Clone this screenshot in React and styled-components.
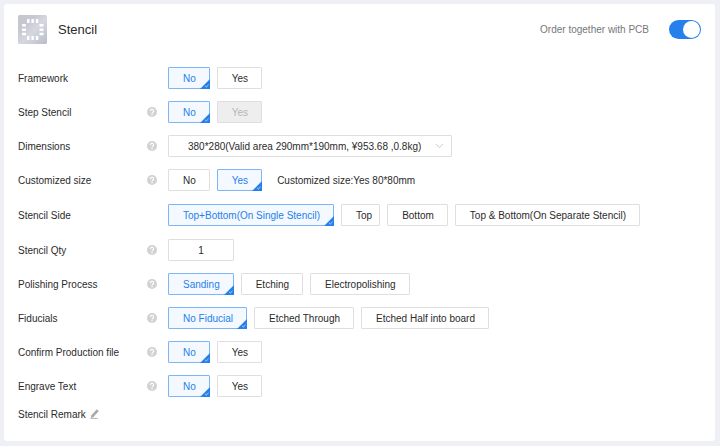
import React, { useState } from 'react';
import styled, { createGlobalStyle, css } from 'styled-components';

const GlobalStyle = createGlobalStyle`
  *, *::before, *::after {
    box-sizing: border-box;
  }

  body {
    margin: 0;
    background-color: #eff0f5;
    color: #2b2b2b;
    font-family: 'Liberation Sans', Arial, sans-serif;
    font-size: 10px;
  }

  button, input, select {
    font: inherit;
    color: inherit;
    margin: 0;
  }
`;

const Page = styled.main`
  padding: 4px 5px 4px 4px;
`;

const Card = styled.section`
  background-color: #fff;
  border-radius: 3px;
  padding: 11px 14px 21px;
`;

const Header = styled.header`
  display: flex;
  align-items: center;
  height: 29px;
  margin-bottom: 23px;
`;

const Title = styled.h1`
  flex: 1;
  margin: 0 0 0 11px;
  font-size: 13px;
  font-weight: 400;
`;

const SwitchLabel = styled.label`
  display: flex;
  align-items: center;
  gap: 20px;
  color: #777;
  cursor: pointer;
`;

const Switch = styled.input`
  appearance: none;
  display: flex;
  align-items: center;
  width: 32px;
  height: 19px;
  padding: 0 1px;
  border-radius: 10px;
  background-color: #ccc;
  cursor: pointer;

  &::before {
    content: '';
    width: 17px;
    height: 17px;
    border-radius: 50%;
    background-color: #fff;
  }

  &:checked {
    justify-content: flex-end;
    background-color: #2680eb;
  }
`;

const Form = styled.div`
  display: flex;
  flex-direction: column;
  gap: 12px;
`;

const Row = styled.div`
  display: flex;
  align-items: center;
  min-height: 22px;
  padding: ${({ $roomy }) => ($roomy ? '1px 0' : '0')};
`;

const LabelCell = styled.div`
  display: flex;
  align-items: center;
  justify-content: space-between;
  flex: none;
  width: 139px;
  margin-right: 11px;
`;

const Controls = styled.div`
  display: flex;
  flex-wrap: wrap;
  align-items: center;
  gap: 7px;
`;

const selected = css`
  border-color: #7db5f8;
  background-color: #f4f9ff;
  color: #2680eb;
`;

const disabled = css`
  background-color: #eee;
  color: #b5b5b5;
`;

const OptionButton = styled.button`
  position: relative;
  height: 22px;
  padding: ${({ $lead }) => ($lead ? '0 7px 0 14px' : '0 13px 0 14px')};
  border: 1px solid #dfdfdf;
  border-radius: 1px;
  background-color: #fff;
  white-space: nowrap;
  cursor: pointer;

  ${({ $selected }) => $selected && selected}

  &:disabled {
    ${disabled}
    cursor: not-allowed;
  }
`;

const Corner = styled.svg`
  position: absolute;
  right: -1px;
  bottom: -1px;
  width: 10px;
  height: 10px;
`;

const SelectBox = styled.div`
  display: grid;
  align-items: center;
  width: 284px;

  > * {
    grid-area: 1 / 1;
  }

  > svg {
    justify-self: end;
    margin-right: 8px;
    pointer-events: none;
  }
`;

const Select = styled.select`
  appearance: none;
  width: 100%;
  height: 22px;
  padding: 0 24px 0 19px;
  border: 1px solid #dfdfdf;
  border-radius: 1px;
  background-color: #fff;
`;

const QtyInput = styled.input`
  width: 66px;
  height: 22px;
  padding: 0;
  border: 1px solid #dfdfdf;
  border-radius: 1px;
  text-align: center;
`;

const Note = styled.span`
  margin-left: 8px;
`;

const Remark = styled.div`
  display: flex;
  align-items: center;
  gap: 4px;
  height: 12px;
  margin-top: -1px;
`;

const IconButton = styled.button`
  display: flex;
  padding: 0;
  border: 0;
  background: none;
  cursor: pointer;
`;

const StencilLogo = () => (
  <svg width="29" height="29" viewBox="0 0 29 29" aria-hidden="true">
    <defs>
      <linearGradient id="steel" x1="0" y1="0" x2="1" y2="1">
        <stop offset="0" stopColor="#c3c5cf" />
        <stop offset="0.3" stopColor="#c6c9d2" />
        <stop offset="0.55" stopColor="#d6d8e0" />
        <stop offset="1" stopColor="#b9bbcb" />
      </linearGradient>
    </defs>
    <rect width="29" height="29" rx="1.5" fill="url(#steel)" />
    <g fill="#fff">
      {[9, 13.4, 17.8].map((p) => (
        <React.Fragment key={p}>
          <rect x={p} y="4" width="2.5" height="4" rx="0.4" />
          <rect x={p} y="21" width="2.5" height="4" rx="0.4" />
          <rect x="4" y={p} width="4" height="2.5" rx="0.4" />
          <rect x="21.5" y={p} width="4" height="2.5" rx="0.4" />
        </React.Fragment>
      ))}
    </g>
  </svg>
);

const HelpIcon = () => (
  <svg width="10" height="10" viewBox="0 0 10 10" role="img" aria-label="Help">
    <circle cx="5" cy="5" r="5" fill="#d2d2d2" />
    <path d="M3.4 4a1.6 1.6 0 1 1 2.4 1.3C5.2 5.7 5 5.9 5 6.5" fill="none" stroke="#fff" strokeWidth="1.1" />
    <circle cx="5" cy="7.8" r="0.7" fill="#fff" />
  </svg>
);

const ChevronIcon = () => (
  <svg width="9" height="6" viewBox="0 0 9 6" aria-hidden="true">
    <path d="M0.8 0.8L4.5 4.7L8.2 0.8" fill="none" stroke="#c4c7ce" strokeWidth="0.9" />
  </svg>
);

const PencilIcon = () => (
  <svg width="10" height="10" viewBox="0 0 10 10" aria-hidden="true">
    <path d="M1.2 6.4L6.8 0.3L8.8 2.1L3.3 8.2L0.7 8.8Z" fill="#aaa" />
    <path d="M0.5 9.4H7.6" stroke="#aaa" strokeWidth="0.9" />
  </svg>
);

const Options = ({ label, items, value, onChange }) => (
  <Controls role="group" aria-label={label}>
    {items.map((item) => (
      <OptionButton
        key={item.text}
        type="button"
        disabled={item.disabled}
        aria-pressed={item.text === value}
        $selected={item.text === value}
        $lead={item.lead}
        onClick={() => onChange(item.text)}
      >
        {item.text}
        {item.text === value && (
          <Corner viewBox="0 0 10 10" aria-hidden="true">
            <path d="M10 0V10H0Z" fill="#2680eb" />
            <path d="M5.1 6.9L6.3 8L8.5 5.9" fill="none" stroke="#fff" strokeOpacity="0.8" strokeWidth="0.8" />
          </Corner>
        )}
      </OptionButton>
    ))}
  </Controls>
);

const Field = ({ label, htmlFor, help = true, roomy, children }) => (
  <Row $roomy={roomy}>
    <LabelCell>
      {htmlFor ? <label htmlFor={htmlFor}>{label}</label> : <span>{label}</span>}
      {help && <HelpIcon />}
    </LabelCell>
    {children}
  </Row>
);

const noYes = [{ text: 'No' }, { text: 'Yes' }];

const App = () => {
  const [together, setTogether] = useState(true);
  const [qty, setQty] = useState('1');
  const [values, setValues] = useState({
    framework: 'No',
    step: 'No',
    customized: 'Yes',
    side: 'Top+Bottom(On Single Stencil)',
    polishing: 'Sanding',
    fiducials: 'No Fiducial',
    confirm: 'No',
    engrave: 'No',
  });

  const bind = (name) => ({
    value: values[name],
    onChange: (value) => setValues({ ...values, [name]: value }),
  });

  return (
    <>
      <GlobalStyle />
      <Page>
        <Card>
          <Header>
            <StencilLogo />
            <Title>Stencil</Title>
            <SwitchLabel>
              Order together with PCB
              <Switch
                type="checkbox"
                checked={together}
                onChange={(e) => setTogether(e.target.checked)}
              />
            </SwitchLabel>
          </Header>

          <Form>
            <Field label="Framework" help={false}>
              <Options label="Framework" items={noYes} {...bind('framework')} />
            </Field>
            <Field label="Step Stencil">
              <Options
                label="Step Stencil"
                items={[{ text: 'No' }, { text: 'Yes', disabled: true }]}
                {...bind('step')}
              />
            </Field>
            <Field label="Dimensions" htmlFor="dimensions">
              <SelectBox>
                <Select id="dimensions">
                  <option>380*280(Valid area 290mm*190mm, ¥953.68 ,0.8kg)</option>
                </Select>
                <ChevronIcon />
              </SelectBox>
            </Field>
            <Field label="Customized size">
              <Controls>
                <Options label="Customized size" items={noYes} {...bind('customized')} />
                <Note>Customized size:Yes 80*80mm</Note>
              </Controls>
            </Field>
            <Field label="Stencil Side" help={false} roomy>
              <Options
                label="Stencil Side"
                items={[
                  { text: 'Top+Bottom(On Single Stencil)' },
                  { text: 'Top', lead: true },
                  { text: 'Bottom' },
                  { text: 'Top & Bottom(On Separate Stencil)' },
                ]}
                {...bind('side')}
              />
            </Field>
            <Field label="Stencil Qty" htmlFor="qty">
              <QtyInput id="qty" type="text" value={qty} onChange={(e) => setQty(e.target.value)} />
            </Field>
            <Field label="Polishing Process">
              <Options
                label="Polishing Process"
                items={[{ text: 'Sanding' }, { text: 'Etching' }, { text: 'Electropolishing' }]}
                {...bind('polishing')}
              />
            </Field>
            <Field label="Fiducials">
              <Options
                label="Fiducials"
                items={[
                  { text: 'No Fiducial' },
                  { text: 'Etched Through' },
                  { text: 'Etched Half into board' },
                ]}
                {...bind('fiducials')}
              />
            </Field>
            <Field label="Confirm Production file">
              <Options label="Confirm Production file" items={noYes} {...bind('confirm')} />
            </Field>
            <Field label="Engrave Text">
              <Options label="Engrave Text" items={noYes} {...bind('engrave')} />
            </Field>
            <Remark>
              Stencil Remark
              <IconButton type="button" aria-label="Edit stencil remark">
                <PencilIcon />
              </IconButton>
            </Remark>
          </Form>
        </Card>
      </Page>
    </>
  );
};

export default App;
